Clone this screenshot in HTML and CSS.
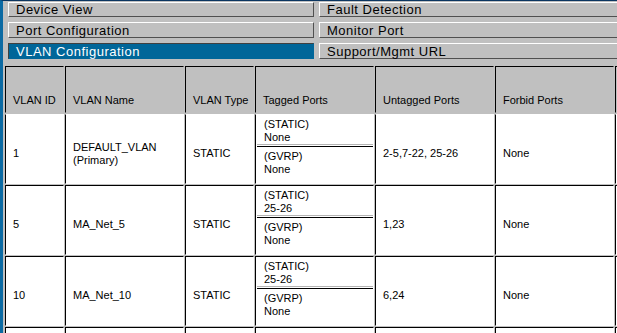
FILE: index.html
```html
<!DOCTYPE html>
<html lang="en">
<head>
<meta charset="utf-8">
<title>VLAN Configuration</title>
<link rel="stylesheet" href="styles.css">
</head>
<body>
<nav class="menu">
  <a class="btn">Device View</a>
  <a class="btn">Fault Detection</a>
  <a class="btn">Port Configuration</a>
  <a class="btn">Monitor Port</a>
  <a class="btn active">VLAN Configuration</a>
  <a class="btn">Support/Mgmt URL</a>
</nav>
<table class="vlans">
  <thead>
    <tr>
      <th class="c1">VLAN ID</th>
      <th class="c2">VLAN Name</th>
      <th class="c3">VLAN Type</th>
      <th class="c4">Tagged Ports</th>
      <th class="c5">Untagged Ports</th>
      <th class="c6">Forbid Ports</th>
      <th class="c7"></th>
    </tr>
  </thead>
  <tbody>
    <tr class="first">
      <td>1</td>
      <td>DEFAULT_VLAN<br>(Primary)</td>
      <td>STATIC</td>
      <td class="tagged">
        <div class="sub static">(STATIC)<br>None</div>
        <div class="sub gvrp">(GVRP)<br>None</div>
      </td>
      <td>2-5,7-22, 25-26</td>
      <td>None</td>
      <td></td>
    </tr>
    <tr>
      <td>5</td>
      <td>MA_Net_5</td>
      <td>STATIC</td>
      <td class="tagged">
        <div class="sub static">(STATIC)<br>25-26</div>
        <div class="sub gvrp">(GVRP)<br>None</div>
      </td>
      <td>1,23</td>
      <td>None</td>
      <td></td>
    </tr>
    <tr>
      <td>10</td>
      <td>MA_Net_10</td>
      <td>STATIC</td>
      <td class="tagged">
        <div class="sub static">(STATIC)<br>25-26</div>
        <div class="sub gvrp">(GVRP)<br>None</div>
      </td>
      <td>6,24</td>
      <td>None</td>
      <td></td>
    </tr>
    <tr>
      <td></td>
      <td></td>
      <td></td>
      <td></td>
      <td></td>
      <td></td>
      <td></td>
    </tr>
  </tbody>
</table>
</body>
</html>
```

FILE: styles.css
```css
html, body {
  margin: 0;
  padding: 0;
}

body {
  box-sizing: border-box;
  min-height: 100vh;
  background: #c0c0c0;
  border-top: 1px solid #0a3560;
  border-left: 3px solid #0b6aa3;
  overflow: hidden;
  font-family: "Liberation Sans", Arial, sans-serif;
  color: #000;
}

.menu {
  display: grid;
  grid-template-columns: 306px 310px;
  grid-template-rows: 15px 16px 16px;
  column-gap: 5px;
  row-gap: 5px;
  margin: 1px 0 0 5px;
}

.btn {
  display: flex;
  align-items: center;
  box-sizing: border-box;
  border: 1px solid;
  border-color: #ffffff #505050 #505050 #ffffff;
  padding: 0 0 0 7px;
  font-size: 13px;
  line-height: 13px;
  letter-spacing: 0.5px;
  white-space: nowrap;
  color: #000;
}

.btn.active {
  background: #006699;
  color: #ffffff;
  border-color: #404040 #006699 #006699 #404040;
}

.vlans {
  border-collapse: separate;
  border-spacing: 1px;
  background: #c0c0c0;
  margin: 6px 0 0 1px;
  table-layout: fixed;
  width: 712px;
  font-size: 11px;
  line-height: 13px;
}

.vlans th,
.vlans td {
  box-sizing: border-box;
  border: 1px solid;
  border-color: #000 #ffffff #ffffff #000;
  padding: 0 0 0 7px;
  text-align: left;
  font-weight: normal;
  white-space: nowrap;
}

.vlans th {
  background: #c0c0c0;
  border-right-color: #c0c0c0;
  border-bottom-color: #c0c0c0;
  height: 47px;
  vertical-align: bottom;
  padding-bottom: 5px;
}

.vlans td {
  background: #ffffff;
  height: 70px;
  vertical-align: middle;
  padding-top: 9px;
}

.vlans tr.first td {
  border-top-color: #ffffff;
}

.c1 { width: 59px; }
.c2 { width: 119px; }
.c3 { width: 69px; }
.c4 { width: 119px; }
.c5 { width: 119px; }
.c6 { width: 119px; }
.c7 { width: 100px; }

.vlans td.tagged {
  padding: 0;
  vertical-align: top;
}

.sub {
  margin-left: 1px;
  padding: 3px 0 0 7px;
}

.sub.static {
  box-sizing: border-box;
  height: 30px;
  border-bottom: 1px solid #b4b4b4;
}

.sub.gvrp {
  margin-top: 1px;
  border-top: 1px solid #000;
}
```
